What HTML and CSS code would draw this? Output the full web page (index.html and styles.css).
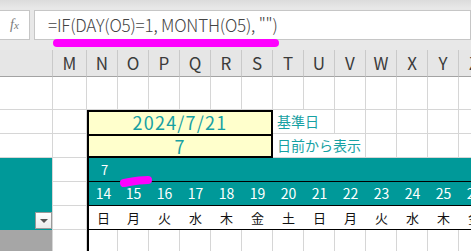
FILE: index.html
```html
<!DOCTYPE html>
<html lang="ja">
<head>
  <meta charset="UTF-8">
  <title>カレンダー</title>
  <link rel="stylesheet" href="styles.css">
</head>
<body>

  <div class="formula-bar">
    <div class="fx-box"><span class="fx">f<small>x</small></span></div>
    <div class="formula">=IF(DAY(O5)=1, MONTH(O5), "")</div>
  </div>

  <div class="sheet">
    <!-- column headers -->
    <div class="hd"></div>
    <div class="hd">M</div>
    <div class="hd">N</div>
    <div class="hd">O</div>
    <div class="hd">P</div>
    <div class="hd">Q</div>
    <div class="hd">R</div>
    <div class="hd">S</div>
    <div class="hd">T</div>
    <div class="hd">U</div>
    <div class="hd">V</div>
    <div class="hd">W</div>
    <div class="hd">X</div>
    <div class="hd">Y</div>
    <div class="hd">Z</div>

    <!-- row 1 -->
    <div class="c"></div><div class="c"></div>
    <div class="c"></div><div class="c"></div><div class="c"></div><div class="c"></div><div class="c"></div>
    <div class="c"></div><div class="c"></div><div class="c"></div><div class="c"></div><div class="c"></div>
    <div class="c"></div><div class="c"></div><div class="c"></div>

    <!-- row 2 -->
    <div class="c"></div><div class="c"></div>
    <div class="c box box-top">2024/7/21</div>
    <div class="c note span2">基準日</div>
    <div class="c"></div><div class="c"></div><div class="c"></div><div class="c"></div><div class="c"></div>

    <!-- row 3 -->
    <div class="c"></div><div class="c"></div>
    <div class="c box box-bottom">7</div>
    <div class="c note span3">日前から表示</div>
    <div class="c"></div><div class="c"></div><div class="c"></div><div class="c"></div>

    <!-- calendar head -->
    <div class="filter-cell"><button class="dropdown"><span class="arrow"></span></button></div>
    <div class="c"></div>
    <div class="month">7</div>

    <div class="c"></div>
    <div class="day first">14</div><div class="day">15</div><div class="day">16</div><div class="day">17</div>
    <div class="day">18</div><div class="day">19</div><div class="day">20</div><div class="day">21</div>
    <div class="day">22</div><div class="day">23</div><div class="day">24</div><div class="day">25</div>
    <div class="day">26</div>

    <div class="c"></div>
    <div class="wd first">日</div><div class="wd">月</div><div class="wd">火</div><div class="wd">水</div>
    <div class="wd">木</div><div class="wd">金</div><div class="wd">土</div><div class="wd">日</div>
    <div class="wd">月</div><div class="wd">火</div><div class="wd">水</div><div class="wd">木</div>
    <div class="wd">金</div>

    <!-- row 7 -->
    <div class="c gray"></div><div class="c"></div>
    <div class="c first"></div><div class="c"></div><div class="c"></div><div class="c"></div><div class="c"></div>
    <div class="c"></div><div class="c"></div><div class="c"></div><div class="c"></div><div class="c"></div>
    <div class="c"></div><div class="c"></div><div class="c"></div>
  </div>

  <!-- marker strokes drawn over the screenshot -->
  <svg class="marks" width="471" height="251" viewBox="0 0 471 251">
    <path d="M57 43 L275 43" />
    <path d="M124 183 C130 182, 138 180, 148 180" />
  </svg>

</body>
</html>
```

FILE: styles.css
```css
/* Spreadsheet look */
body {
  margin: 0;
  width: 471px;
  height: 251px;
  overflow: hidden;
  position: relative;
  background: #ffffff;
  font-family: "Noto Sans CJK JP", "Noto Sans", sans-serif;
}

.formula-bar {
  display: flex;
  gap: 4px;
  height: 50px;
  padding-top: 10px;
  box-sizing: border-box;
  background: linear-gradient(#dcdcdc, #e8e8e8 8px, #e8e8e8);
}

.fx-box,
.formula {
  height: 30px;
  box-sizing: border-box;
  background: #ffffff;
  border: 1px solid #c6c6c6;
}

.fx-box {
  width: 31px;
  margin-left: -1px;
  display: flex;
  align-items: center;
  justify-content: center;
}

.fx {
  font-family: "Liberation Serif", serif;
  font-style: italic;
  font-size: 14px;
  color: #7a7a7a;
}

.fx small {
  font-size: 11px;
}

.formula {
  flex: 1;
  padding-left: 13px;
  font-family: "Noto Sans CJK JP", sans-serif;
  font-size: 17px;
  font-weight: 300;
  letter-spacing: -0.2px;
  line-height: 27px;
  color: #444444;
  white-space: nowrap;
  overflow: hidden;
}

.sheet {
  display: grid;
  grid-template-columns: 53px 34px repeat(13, 31px);
  grid-template-rows: 27px 33px 24px 24px 24px 24px 24px 24px;
}

.sheet > div {
  box-sizing: border-box;
}

.hd {
  background: #e6e6e6;
  border-right: 1px solid #c9c9c9;
  border-bottom: 1px solid #a3a3a3;
  text-align: center;
  font-size: 17px;
  line-height: 26px;
  color: #3b3b3b;
}

.c {
  border-right: 1px solid #d6d6d6;
  border-bottom: 1px solid #d6d6d6;
}

.box {
  grid-column: span 6;
  background: #ffffcc;
  border: 2px solid #000000;
  color: #17a1a3;
  text-align: center;
  font-size: 18px;
  letter-spacing: 1.2px;
  line-height: 21px;
}

.box-top {
  border-bottom: none;
}

.note {
  color: #17a1a3;
  font-size: 14px;
  line-height: 23px;
  padding-left: 4px;
  white-space: nowrap;
}

.span2 {
  grid-column: span 2;
}

.span3 {
  grid-column: span 3;
}

.filter-cell {
  grid-row: span 3;
  background: #009999;
  border-right: 1px solid #d6d6d6;
  display: flex;
  align-items: flex-end;
  justify-content: flex-end;
  padding-bottom: 1px;
}

.dropdown {
  width: 17px;
  height: 17px;
  padding: 0;
  border: 1px solid #9a9a9a;
  background: linear-gradient(#ffffff, #ececec);
  display: flex;
  align-items: center;
  justify-content: center;
}

.arrow {
  width: 0;
  height: 0;
  border-left: 4px solid transparent;
  border-right: 4px solid transparent;
  border-top: 4px solid #555555;
}

.month {
  grid-column: span 13;
  background: #009999;
  border-left: 2px solid #000000;
  border-bottom: 1px solid #000000;
  color: #ffffff;
  font-size: 13px;
  line-height: 23px;
  padding-left: 12px;
}

.day {
  background: #009999;
  border-bottom: 1px solid #000000;
  color: #ffffff;
  text-align: center;
  font-size: 14px;
  line-height: 23px;
}

.wd {
  border-bottom: 1px solid #000000;
  text-align: center;
  font-size: 13px;
  line-height: 23px;
  color: #111111;
}

.first {
  border-left: 2px solid #000000;
}

.gray {
  background: #a6a6a6;
}

.marks {
  position: absolute;
  left: 0;
  top: 0;
  pointer-events: none;
}

.marks path {
  fill: none;
  stroke: #ff00ff;
  stroke-width: 8;
  stroke-linecap: round;
}
```
